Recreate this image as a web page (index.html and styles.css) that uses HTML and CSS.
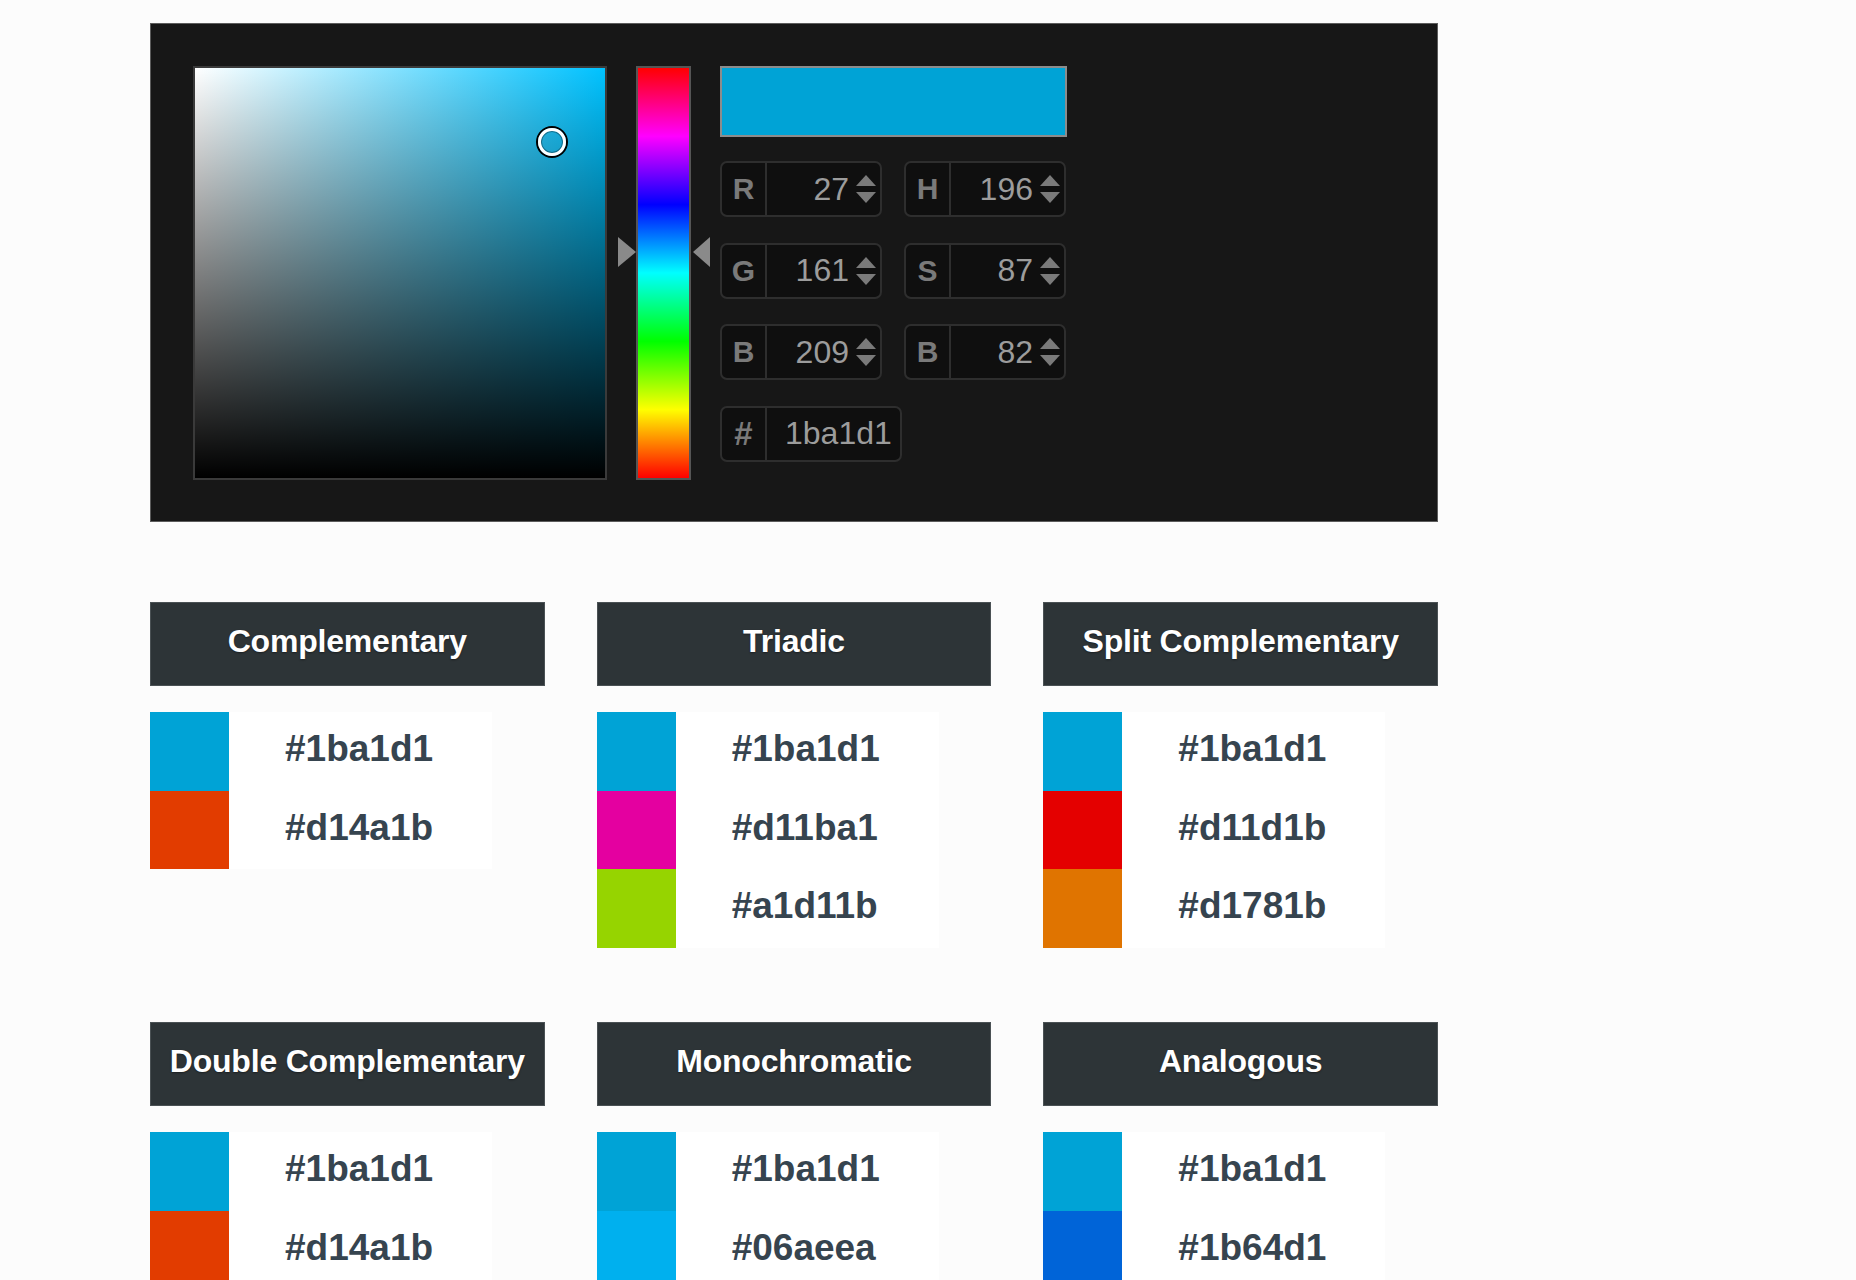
FILE: index.html
```html
<!DOCTYPE html>
<html lang="en">

<head>
    <meta charset="UTF-8">
    <meta name="viewport" content="width=device-width, initial-scale=1.0">
    <title>Color Schemes</title>
    <link rel="stylesheet" href="styles.css">
</head>

<body>
    <div class="page">

        <!-- picker -->
        <div class="picker">
            <div class="sv">
                <span class="sv-cursor"></span>
            </div>

            <div class="hue">
                <span class="hue-arrow hue-arrow-left"></span>
                <span class="hue-arrow hue-arrow-right"></span>
            </div>

            <div class="readout">
                <div class="preview"></div>

                <div class="fields">
                    <div class="field">
                        <span class="field-label">R</span>
                        <span class="field-value">27</span>
                        <span class="spin"></span>
                    </div>
                    <div class="field">
                        <span class="field-label">H</span>
                        <span class="field-value">196</span>
                        <span class="spin"></span>
                    </div>
                    <div class="field">
                        <span class="field-label">G</span>
                        <span class="field-value">161</span>
                        <span class="spin"></span>
                    </div>
                    <div class="field">
                        <span class="field-label">S</span>
                        <span class="field-value">87</span>
                        <span class="spin"></span>
                    </div>
                    <div class="field">
                        <span class="field-label">B</span>
                        <span class="field-value">209</span>
                        <span class="spin"></span>
                    </div>
                    <div class="field">
                        <span class="field-label">B</span>
                        <span class="field-value">82</span>
                        <span class="spin"></span>
                    </div>
                    <div class="field field-hex">
                        <span class="field-label">#</span>
                        <span class="field-value">1ba1d1</span>
                    </div>
                </div>
            </div>
        </div>

        <!-- schemes -->
        <div class="schemes">
            <div class="scheme">
                <h2>Complementary</h2>
                <ul class="swatches">
                    <li><span class="chip" style="background:#00a3d6"></span><span class="hex">#1ba1d1</span></li>
                    <li><span class="chip" style="background:#e23c00"></span><span class="hex">#d14a1b</span></li>
                </ul>
            </div>

            <div class="scheme">
                <h2>Triadic</h2>
                <ul class="swatches">
                    <li><span class="chip" style="background:#00a3d6"></span><span class="hex">#1ba1d1</span></li>
                    <li><span class="chip" style="background:#e400a0"></span><span class="hex">#d11ba1</span></li>
                    <li><span class="chip" style="background:#96d400"></span><span class="hex">#a1d11b</span></li>
                </ul>
            </div>

            <div class="scheme">
                <h2>Split Complementary</h2>
                <ul class="swatches">
                    <li><span class="chip" style="background:#00a3d6"></span><span class="hex">#1ba1d1</span></li>
                    <li><span class="chip" style="background:#e40000"></span><span class="hex">#d11d1b</span></li>
                    <li><span class="chip" style="background:#e07400"></span><span class="hex">#d1781b</span></li>
                </ul>
            </div>

            <div class="scheme">
                <h2>Double Complementary</h2>
                <ul class="swatches">
                    <li><span class="chip" style="background:#00a3d6"></span><span class="hex">#1ba1d1</span></li>
                    <li><span class="chip" style="background:#e23c00"></span><span class="hex">#d14a1b</span></li>
                    <li><span class="chip" style="background:#0064d8"></span><span class="hex">#1b64d1</span></li>
                    <li><span class="chip" style="background:#e07400"></span><span class="hex">#d1881b</span></li>
                </ul>
            </div>

            <div class="scheme">
                <h2>Monochromatic</h2>
                <ul class="swatches">
                    <li><span class="chip" style="background:#00a3d6"></span><span class="hex">#1ba1d1</span></li>
                    <li><span class="chip" style="background:#00b0ee"></span><span class="hex">#06aeea</span></li>
                    <li><span class="chip" style="background:#007fa8"></span><span class="hex">#1582a6</span></li>
                </ul>
            </div>

            <div class="scheme">
                <h2>Analogous</h2>
                <ul class="swatches">
                    <li><span class="chip" style="background:#00a3d6"></span><span class="hex">#1ba1d1</span></li>
                    <li><span class="chip" style="background:#0064d8"></span><span class="hex">#1b64d1</span></li>
                    <li><span class="chip" style="background:#00d6c4"></span><span class="hex">#1bd1bf</span></li>
                </ul>
            </div>
        </div>

    </div>
</body>

</html>
```

FILE: styles.css
```css
body {
    margin: 0;
    background-color: #fcfcfc;
    font-family: "Liberation Sans", Arial, sans-serif;
}

.page {
    width: 1288px;
    margin-left: 150px;
    padding-top: 23px;
}

/* picker panel */
.picker {
    box-sizing: border-box;
    height: 499px;
    display: flex;
    align-items: flex-start;
    gap: 29px;
    padding: 42px 41px 42px 42px;
    background-color: #171717;
    border: 1px solid #5c5c5c;
}

.sv {
    position: relative;
    width: 410px;
    height: 410px;
    border: 2px solid #3a3a3a;
    background:
        linear-gradient(to top, #000, rgba(0, 0, 0, 0)),
        linear-gradient(to right, #fff, #00c2ff);
}

.sv-cursor {
    position: absolute;
    left: 343px;
    top: 60px;
    box-sizing: border-box;
    width: 28px;
    height: 28px;
    border: 3px solid #fff;
    border-radius: 50%;
    box-shadow: 0 0 0 2px #000, inset 0 0 0 1px rgba(0, 0, 0, 0.35);
}

.hue {
    position: relative;
    width: 51px;
    height: 410px;
    border: 2px solid #555;
    background: linear-gradient(to bottom, #f00 0%, #f0f 16.66%, #00f 33.33%, #0ff 50%, #0f0 66.66%, #ff0 83.33%, #f00 100%);
}

.hue-arrow {
    position: absolute;
    top: 169px;
    width: 0;
    height: 0;
    border-top: 15.5px solid transparent;
    border-bottom: 15.5px solid transparent;
}

.hue-arrow-left {
    left: -20px;
    border-left: 18px solid #8a8a8a;
}

.hue-arrow-right {
    left: 55px;
    border-right: 17px solid #8a8a8a;
}

.readout {
    width: 347px;
}

.preview {
    height: 67px;
    border: 2px solid #8c8c8c;
    background-color: #00a3d6;
}

.fields {
    display: grid;
    grid-template-columns: 162px 162px;
    column-gap: 22px;
    row-gap: 25.5px;
    margin-top: 24px;
}

.field {
    box-sizing: border-box;
    display: flex;
    align-items: center;
    height: 56px;
    background-color: #0f0f0f;
    border: 2px solid #2e2e2e;
    border-radius: 7px;
}

.field-label {
    align-self: stretch;
    display: flex;
    align-items: center;
    justify-content: center;
    width: 43px;
    border-right: 2px solid #2e2e2e;
    color: #7a7a7a;
    font-size: 30px;
    font-weight: bold;
}

.field-value {
    flex: 1;
    padding-right: 7px;
    text-align: right;
    color: #9c9c9c;
    font-size: 32px;
}

.field-hex {
    width: 182px;
}

.field-hex .field-label {
    font-size: 33px;
}

.field-hex .field-value {
    padding-left: 18px;
    text-align: left;
}

/* up / down stepper */
.spin {
    display: flex;
    flex-direction: column;
    gap: 6px;
    width: 21px;
    margin-right: 3px;
}

.spin::before,
.spin::after {
    content: "";
    width: 0;
    height: 0;
    border-left: 10.5px solid transparent;
    border-right: 10.5px solid transparent;
}

.spin::before {
    border-bottom: 11px solid #7a7a7a;
}

.spin::after {
    border-top: 11px solid #7a7a7a;
}

/* scheme lists */
.schemes {
    display: grid;
    grid-template-columns: repeat(3, 1fr);
    column-gap: 52px;
    row-gap: 74px;
    margin-top: 80px;
}

.scheme h2 {
    box-sizing: border-box;
    display: flex;
    align-items: center;
    justify-content: center;
    height: 84px;
    margin: 0;
    padding-bottom: 6px;
    background-color: #2d3437;
    border: 1px solid #4a5154;
    color: #fff;
    font-size: 32px;
    font-weight: bold;
    letter-spacing: -0.2px;
    text-shadow: 0 1px 2px rgba(0, 0, 0, 0.4);
}

.swatches {
    width: 342px;
    margin: 26px 0 0;
    padding: 0;
    list-style: none;
}

.swatches li {
    display: flex;
    height: 78.7px;
}

.chip {
    width: 79px;
}

.hex {
    flex: 1;
    display: flex;
    align-items: center;
    padding-left: 56px;
    padding-bottom: 5px;
    background-color: #fff;
    color: #36444f;
    font-size: 37px;
    font-weight: bold;
}
```
